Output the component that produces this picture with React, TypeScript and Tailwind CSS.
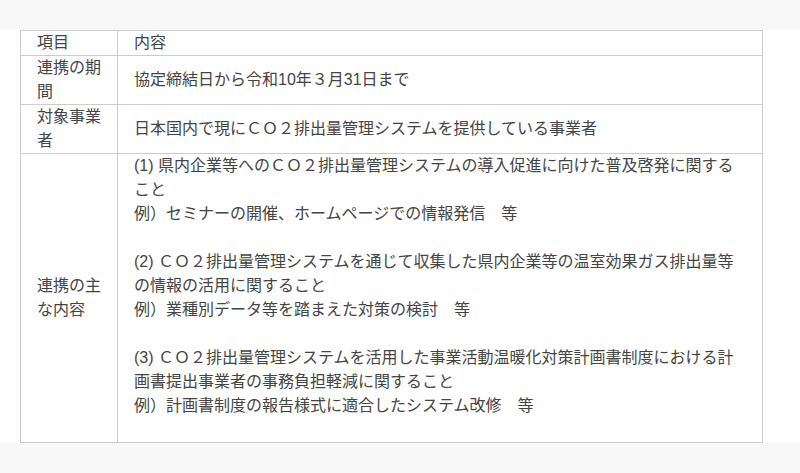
const rows = [
  { label: "連携の期間", content: <>協定締結日から令和10年３月31日まで</> },
  { label: "対象事業者", content: <>日本国内で現にＣＯ２排出量管理システムを提供している事業者</> },
];

const App = () => {
  return (
    <div
      className="min-h-[473px] w-[800px] bg-[#f8f8f8] pt-[30px] text-[16px] leading-[24px] text-[#444]"
      style={{ fontFamily: '"Liberation Sans", "Noto Sans CJK JP", sans-serif' }}
    >
      <div className="bg-white px-[20px]">
        <table className="w-[743px] border-collapse border border-[#ccc]">
          <tbody>
            <tr>
              <td className="w-[97px] border border-[#ccc] px-4 align-middle">項目</td>
              <td className="border border-[#ccc] px-4 align-middle">内容</td>
            </tr>
            {rows.map((row) => (
              <tr key={row.label}>
                <td className="border border-[#ccc] px-4 align-middle">{row.label}</td>
                <td className="border border-[#ccc] px-4 align-middle">{row.content}</td>
              </tr>
            ))}
            <tr>
              <td className="border border-[#ccc] px-4 align-middle">連携の主な内容</td>
              <td className="border border-[#ccc] px-4 align-middle">
                (1) 県内企業等へのＣＯ２排出量管理システムの導入促進に向けた普及啓発に関すること
                <br />
                例）セミナーの開催、ホームページでの情報発信　等
                <br />
                <br />
                (2) ＣＯ２排出量管理システムを通じて収集した県内企業等の温室効果ガス排出量等の情報の活用に関すること
                <br />
                例）業種別データ等を踏まえた対策の検討　等
                <br />
                <br />
                (3) ＣＯ２排出量管理システムを活用した事業活動温暖化対策計画書制度における計画書提出事業者の事務負担軽減に関すること
                <br />
                例）計画書制度の報告様式に適合したシステム改修　等
                <br />
                <br />
              </td>
            </tr>
          </tbody>
        </table>
      </div>
    </div>
  );
};

export default App;
